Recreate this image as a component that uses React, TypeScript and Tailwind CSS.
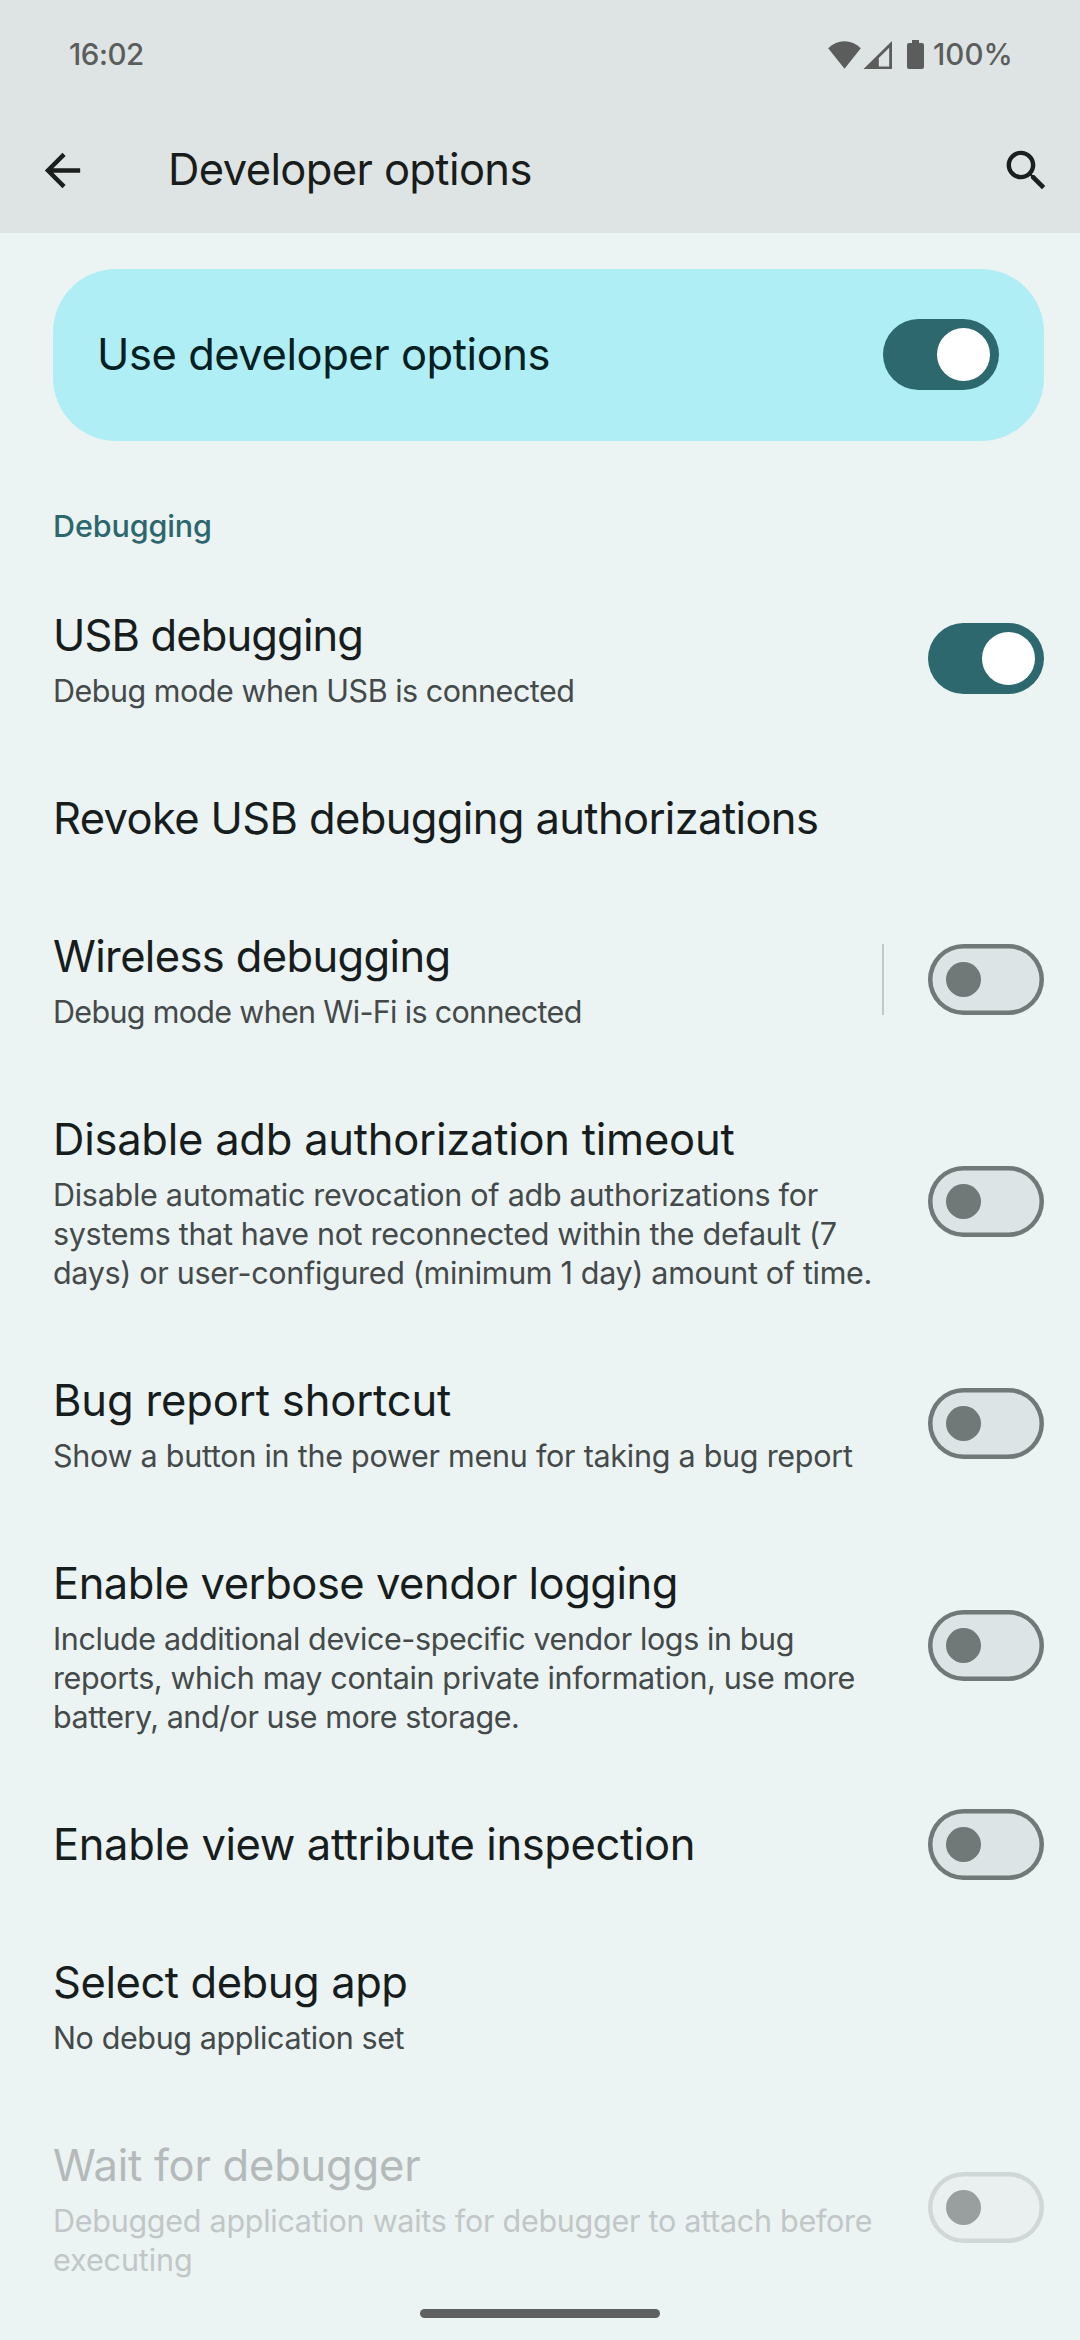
import type { ReactNode } from "react";

type Line = { text: string; tracking: string };

type Option = {
  title: Line;
  summary?: Line[];
  control?: "on" | "off" | "disabled";
  divider?: boolean;
};

const options: Option[] = [
  {
    title: { text: "USB debugging", tracking: "tracking-[-0.88px]" },
    summary: [{ text: "Debug mode when USB is connected", tracking: "tracking-[-0.49px]" }],
    control: "on",
  },
  { title: { text: "Revoke USB debugging authorizations", tracking: "tracking-[-0.64px]" } },
  {
    title: { text: "Wireless debugging", tracking: "tracking-[-0.64px]" },
    summary: [{ text: "Debug mode when Wi-Fi is connected", tracking: "tracking-[-0.68px]" }],
    control: "off",
    divider: true,
  },
  {
    title: { text: "Disable adb authorization timeout", tracking: "tracking-[-0.24px]" },
    summary: [
      { text: "Disable automatic revocation of adb authorizations for", tracking: "tracking-[-0.28px]" },
      { text: "systems that have not reconnected within the default (7", tracking: "tracking-[-0.31px]" },
      { text: "days) or user-configured (minimum 1 day) amount of time.", tracking: "tracking-[-0.33px]" },
    ],
    control: "off",
  },
  {
    title: { text: "Bug report shortcut", tracking: "tracking-[-0.14px]" },
    summary: [{ text: "Show a button in the power menu for taking a bug report", tracking: "tracking-[-0.26px]" }],
    control: "off",
  },
  {
    title: { text: "Enable verbose vendor logging", tracking: "tracking-[-0.49px]" },
    summary: [
      { text: "Include additional device-specific vendor logs in bug", tracking: "tracking-[-0.4px]" },
      { text: "reports, which may contain private information, use more", tracking: "tracking-[-0.37px]" },
      { text: "battery, and/or use more storage.", tracking: "tracking-[-0.47px]" },
    ],
    control: "off",
  },
  {
    title: { text: "Enable view attribute inspection", tracking: "tracking-[-0.38px]" },
    control: "off",
  },
  {
    title: { text: "Select debug app", tracking: "tracking-[-0.43px]" },
    summary: [{ text: "No debug application set", tracking: "tracking-[-0.39px]" }],
  },
  {
    title: { text: "Wait for debugger", tracking: "tracking-[-0.22px]" },
    summary: [
      { text: "Debugged application waits for debugger to attach before", tracking: "tracking-[-0.27px]" },
      { text: "executing", tracking: "tracking-[-0.09px]" },
    ],
    control: "disabled",
  },
];

function Switch({ state }: { state: "on" | "off" | "disabled" }) {
  if (state === "on") {
    return (
      <div role="switch" aria-checked="true" className="flex h-[71px] w-[116px] shrink-0 items-center justify-end rounded-full bg-[#2c686d] pr-[9px]">
        <div className="size-[53px] rounded-full bg-white" />
      </div>
    );
  }
  const disabled = state === "disabled";
  return (
    <div
      role="switch"
      aria-checked="false"
      className={`flex h-[71px] w-[116px] shrink-0 items-center rounded-full pl-[17.75px] ${
        disabled
          ? "bg-[#eaf0f0] shadow-[inset_0_0_0_4.5px_#d1d7d6]"
          : "bg-[#dce4e5] shadow-[inset_0_0_0_4.5px_#707977]"
      }`}
    >
      <div className={`size-[35.5px] rounded-full ${disabled ? "bg-[#999f9e]" : "bg-[#707977]"}`} />
    </div>
  );
}

function OptionRow({ option }: { option: Option }) {
  const disabled = option.control === "disabled";
  const evenHeight = !option.summary || option.summary.length === 2;
  return (
    <div className="flex items-center justify-between pr-9 pl-[53px]">
      <div className={option.summary ? "pt-[41px] pb-10" : "pt-[41px] pb-[43px]"}>
        <div
          className={`text-[43.5px] leading-[54px] whitespace-nowrap ${option.title.tracking} ${
            disabled ? "text-[#b4bab9]" : "text-[#171d1d]"
          }`}
        >
          {option.title.text}
        </div>
        {option.summary && (
          <div className={`mt-[9px] text-[30.5px] leading-[39px] ${disabled ? "text-[#c1c7c6]" : "text-[#444a4a]"}`}>
            {option.summary.map((line) => (
              <div key={line.text} className={`whitespace-nowrap ${line.tracking}`}>
                {line.text}
              </div>
            ))}
          </div>
        )}
      </div>
      {option.control && (
        <div className={evenHeight ? "mb-px flex items-center" : "flex items-center"}>
          {option.divider && <div className="mr-11 h-[71px] w-0.5 bg-[#bfc8c8]" />}
          <Switch state={option.control} />
        </div>
      )}
    </div>
  );
}

function MaterialIcon({ children }: { children: ReactNode }) {
  return (
    <svg viewBox="0 0 24 24" className="mb-0.5 size-[53px]" fill="#1b1f1e">
      {children}
    </svg>
  );
}

export default function App() {
  return (
    <div className="relative h-[2340px] w-[1080px] overflow-hidden bg-[#ecf3f3] font-['Inter',sans-serif]">
      <header className="h-[233px] bg-[#dee4e3]">
        <div className="flex h-[109px] items-center justify-between pr-[67px] pl-[69px] text-[29.5px] font-medium text-[#5b5d5c]">
          <span className="tracking-[-0.43px]">16:02</span>
          <div className="flex items-center">
            <svg viewBox="0 0 33 28" className="h-7 w-[33px]" fill="#5b5d5c">
              <path d="M16.5 27.8 0.2 7.2C4.8 2.6 10.4 0.3 16.5 0.3S28.2 2.6 32.8 7.2Z" />
            </svg>
            <svg viewBox="0 0 29 28" className="ml-0.5 h-7 w-[29px]" fill="#5b5d5c" fillRule="evenodd">
              <path d="M0.5 27.9 29 0V27.9ZM15.8 25.5H26.2V6.7L15.8 17Z" />
            </svg>
            <svg viewBox="0 0 17 29" className="ml-[15px] h-[29px] w-[17px]" fill="#5b5d5c">
              <path d="M5 0h7v3h3a2 2 0 0 1 2 2v22a2 2 0 0 1-2 2H2a2 2 0 0 1-2-2V5a2 2 0 0 1 2-2h3Z" />
            </svg>
            <span className="ml-[9px] tracking-[0.12px]">100%</span>
          </div>
        </div>
        <div className="flex h-[124px] items-center pr-[27px] pl-9">
          <MaterialIcon>
            <path d="M20 11H7.83l5.59-5.59L12 4l-8 8 8 8 1.41-1.41L7.83 13H20v-2z" />
          </MaterialIcon>
          <h1 className="ml-[79px] grow pb-1 text-[43.5px] leading-[54px] tracking-[-0.62px] text-[#181d1c]">
            Developer options
          </h1>
          <MaterialIcon>
            <path d="M15.5 14h-.79l-.28-.27C15.41 12.59 16 11.11 16 9.5 16 5.91 13.09 3 9.5 3S3 5.91 3 9.5 5.91 16 9.5 16c1.61 0 3.09-.59 4.23-1.57l.27.28v.79l5 4.99L20.49 19l-4.99-5zm-6 0C7.01 14 5 11.99 5 9.5S7.01 5 9.5 5 14 7.01 14 9.5 11.99 14 9.5 14z" />
          </MaterialIcon>
        </div>
      </header>

      <main>
        <div className="mt-9 mr-9 ml-[53px] flex h-[172px] items-center justify-between rounded-[63px] bg-[#b0eef5] pr-[45px] pb-px pl-11">
          <span className="pb-px text-[43.5px] leading-[54px] tracking-[-0.45px] text-[#042022]">
            Use developer options
          </span>
          <Switch state="on" />
        </div>

        <h2 className="flex h-[126px] items-center pt-[42px] pl-[53px] text-[30.5px] leading-[39px] font-medium tracking-[-0.12px] text-[#2b676c]">
          Debugging
        </h2>

        {options.map((option) => (
          <OptionRow key={option.title.text} option={option} />
        ))}
      </main>

      <div className="absolute bottom-[22px] left-1/2 h-[9px] w-60 -translate-x-1/2 rounded-full bg-[#5f6160]" />
    </div>
  );
}
